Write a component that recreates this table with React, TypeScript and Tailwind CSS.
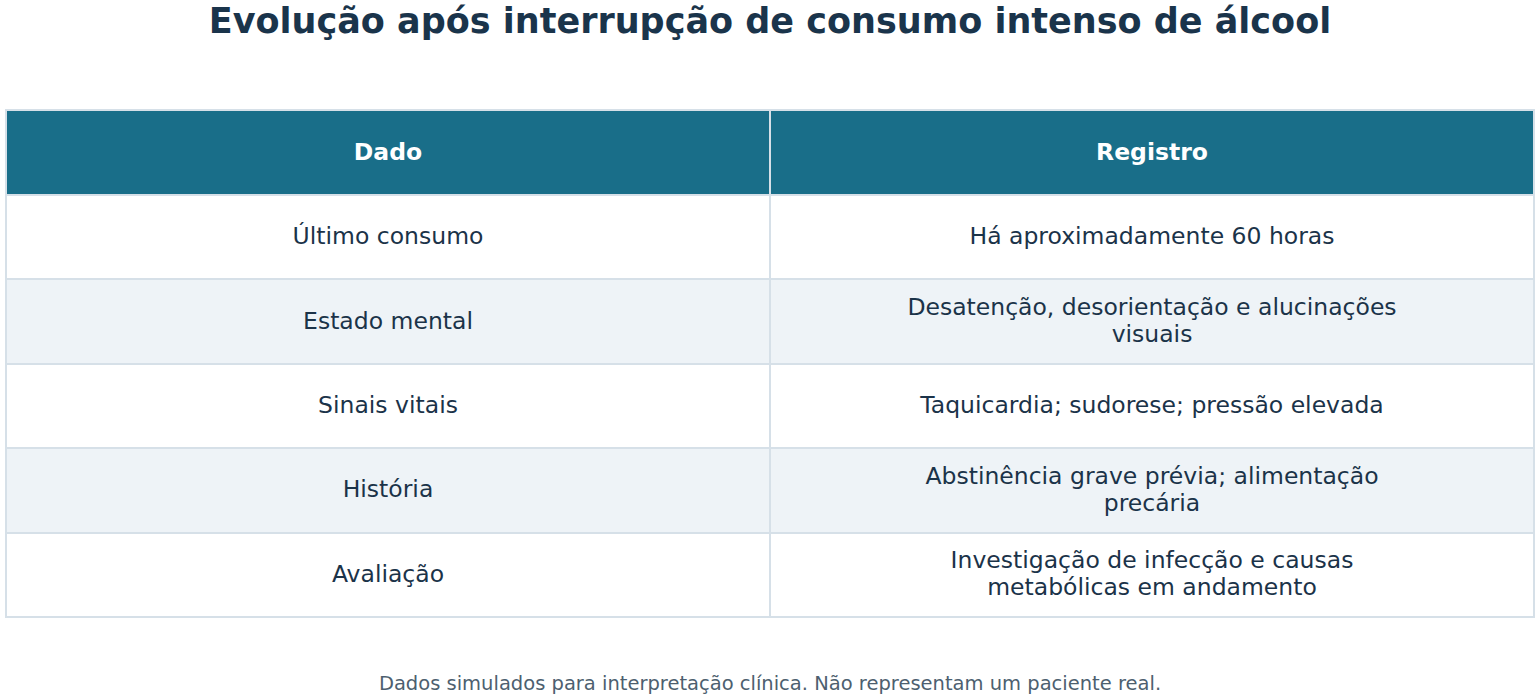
const rows: [string, string][] = [
  ['Último consumo', 'Há aproximadamente 60 horas'],
  ['Estado mental', 'Desatenção, desorientação e alucinações\nvisuais'],
  ['Sinais vitais', 'Taquicardia; sudorese; pressão elevada'],
  ['História', 'Abstinência grave prévia; alimentação\nprecária'],
  ['Avaliação', 'Investigação de infecção e causas\nmetabólicas em andamento'],
]

export default function App() {
  return (
    <div className="w-[1540px] h-[700px] bg-white font-['DejaVu_Sans',sans-serif] text-[#1b3349] overflow-hidden">
      <h1 className="text-center text-[35px] font-bold leading-[42px] text-[#1a344b]">
        Evolução após interrupção de consumo intenso de álcool
      </h1>

      <div className="px-[5px] mt-[67px]">
        <table className="w-full border-collapse table-fixed">
          <thead>
            <tr className="bg-[#196e89] text-white">
              <th className="h-[85px] border-2 border-[#d6e0e8] text-[23.5px] font-bold">Dado</th>
              <th className="h-[85px] border-2 border-[#d6e0e8] text-[23.5px] font-bold">Registro</th>
            </tr>
          </thead>
          <tbody>
            {rows.map(([dado, registro], i) => (
              <tr key={dado} className={i % 2 === 1 ? 'bg-[#eef3f7]' : 'bg-white'}>
                <td className="h-[84.4px] border-2 border-[#d6e0e8] text-center text-[23.5px] leading-[27px] pb-[1px]">{dado}</td>
                <td className="h-[84.4px] border-2 border-[#d6e0e8] text-center text-[23.5px] leading-[27px] pb-[1px] whitespace-pre-line">
                  {registro}
                </td>
              </tr>
            ))}
          </tbody>
        </table>
      </div>

      <p className="mt-[51px] text-center text-[19.5px] text-[#4d5f6f]">
        Dados simulados para interpretação clínica. Não representam um paciente real.
      </p>
    </div>
  )
}
